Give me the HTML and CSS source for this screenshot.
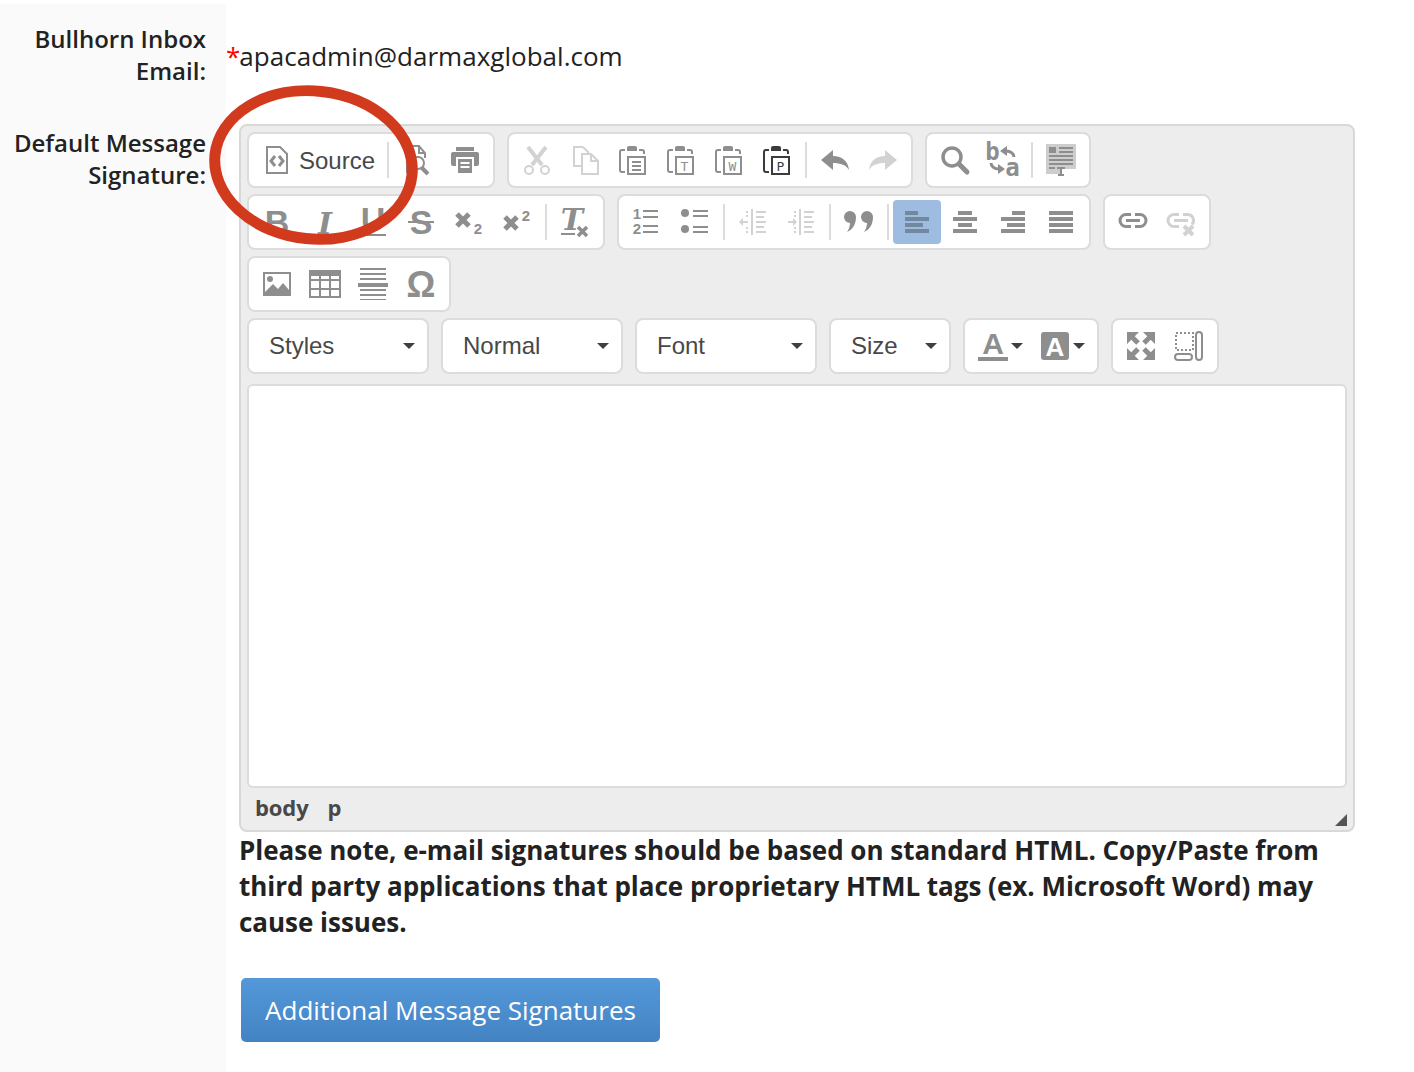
FILE: index.html
```html
<!DOCTYPE html>
<html lang="en">
<head>
<meta charset="utf-8">
<title>Signature settings</title>
<link rel="stylesheet" href="styles.css">
</head>
<body>
<div class="form">
  <div class="label label-first">Bullhorn Inbox<br>Email:</div>
  <div class="value"><span class="req">*</span>apacadmin@darmaxglobal.com</div>
  <div class="label label-second">Default Message<br>Signature:</div>
  <div class="field">
    <div class="editor">
      <div class="toolbar">
        <div class="row">
        <div class="group">
          <div class="btn source">
            <svg class="ic" viewBox="0 0 32 32"><path class="ln" d="M6 3h13l7 7v19H6z"/><path class="ln mid" d="M14 12l-4 5 4 5M18 12l4 5-4 5"/></svg>
            <span class="source-text">Source</span>
          </div>
          <i class="sep"></i>
          <div class="btn"><svg class="ic" viewBox="0 0 32 32"><path class="ln" d="M6 29V2h12l6 7v5M18 2v7h6"/><circle class="ln" cx="17" cy="19" r="6"/><path class="ln thick" d="M21 24l6 6"/></svg></div>
          <div class="btn"><svg class="ic" viewBox="0 0 32 32"><path class="fl" d="M7 3h18v4H7zM4 8h24a2 2 0 0 1 2 2v10a2 2 0 0 1-2 2h-3v-9H7v9H4a2 2 0 0 1-2-2V10a2 2 0 0 1 2-2z"/><path class="fl" d="M9 15h14v14H9zM11.500 18v2h9v-2zm0 4v2h9v-2z" fill-rule="evenodd"/></svg></div>
        </div>
        <div class="group off">
          <div class="btn"><svg class="ic" viewBox="0 0 32 32"><path class="ln thick" d="M7 3l14 18M25 3L11 21"/><circle class="ln" cx="8" cy="26" r="4"/><circle class="ln" cx="24" cy="26" r="4"/></svg></div>
          <div class="btn"><svg class="ic" viewBox="0 0 32 32"><path class="ln" d="M14 3H5v19h7M14 3l6 6M13 10h9l7 7v13H13zM22 10v7h7"/></svg></div>
          <div class="btn on"><svg class="ic" viewBox="0 0 32 32"><use href="#clip"/><path class="ln" d="M11 13h17v17H11z"/><path class="ln" d="M15 18h9M15 22h9M15 26h9"/></svg></div>
          <div class="btn on"><svg class="ic" viewBox="0 0 32 32"><use href="#clip"/><path class="ln" d="M11 13h17v17H11z"/><text class="tiny" x="19.500" y="27">T</text></svg></div>
          <div class="btn on"><svg class="ic" viewBox="0 0 32 32"><use href="#clip"/><path class="ln" d="M11 13h17v17H11z"/><text class="tiny" x="19.500" y="27">W</text></svg></div>
          <div class="btn dark"><svg class="ic" viewBox="0 0 32 32"><use href="#clip"/><path class="ln" d="M11 13h17v17H11z"/><text class="tiny" x="19.500" y="27">P</text></svg></div>
          <i class="sep"></i>
          <div class="btn on"><svg class="ic" viewBox="0 0 32 32"><path class="fl" d="M2 16l12-10v6c9 0 15 5 16 14-3-5-8-7-16-7v7z"/></svg></div>
          <div class="btn"><svg class="ic" viewBox="0 0 32 32"><path class="fl" d="M30 16L18 6v6C9 12 3 17 2 26c3-5 8-7 16-7v7z"/></svg></div>
        </div>
        <div class="group">
          <div class="btn"><svg class="ic" viewBox="0 0 32 32"><circle class="ln fat" cx="13" cy="13" r="9"/><path class="ln fatter" d="M20 20l8 8"/></svg></div>
          <div class="btn"><svg class="ic" viewBox="0 0 32 32"><text class="mono" x="5.500" y="16">b</text><text class="mono" x="25.500" y="32">a</text><path class="ln mid" d="M27 13c0-3-3-6-8-6M4 19c0 3 3 6 8 6"/><path class="fl" d="M20 2l-7 5 7 5zM11 20l7 5-7 5z"/></svg></div>
          <i class="sep"></i>
          <div class="btn"><svg class="ic" viewBox="0 0 32 32"><path class="soft" d="M1 0h30v25H17v5H1z"/><path class="fl" d="M4 3h7v6H4zM14 3h14v2H14zM14 7h14v2H14zM4 11h24v2H4zM4 15h24v2H4zM4 19h24v2H4zM4 23h6v2H4zM12 23h8v2h-3v5h2v2h-6v-2h2v-5h-3z"/></svg></div>
        </div>
        </div>
        <div class="row">
        <div class="group">
          <div class="btn"><svg class="ic" viewBox="0 0 32 32"><text class="glyph b" x="16" y="28">B</text></svg></div>
          <div class="btn"><svg class="ic" viewBox="0 0 32 32"><text class="glyph serif-i" x="16" y="28">I</text></svg></div>
          <div class="btn"><svg class="ic" viewBox="0 0 32 32"><text class="glyph b" x="16" y="25">U</text><path class="fl" d="M3 28h26v2H3z"/></svg></div>
          <div class="btn"><svg class="ic" viewBox="0 0 32 32"><text class="glyph b" x="16" y="28">S</text><path class="fl" d="M3 15h26v2H3z"/></svg></div>
          <div class="btn"><svg class="ic" viewBox="0 0 32 32"><path class="ln heavy" d="M4 8l12 12M16 8L4 20"/><text class="sub" x="25" y="28">2</text></svg></div>
          <div class="btn"><svg class="ic" viewBox="0 0 32 32"><path class="ln heavy" d="M4 11l12 12M16 11L4 23"/><text class="sub" x="25" y="15">2</text></svg></div>
          <i class="sep"></i>
          <div class="btn"><svg class="ic" viewBox="0 0 32 32"><text class="glyph serif-i" x="13" y="24">T</text><path class="fl" d="M2 27h14v2H2z"/><path class="ln fat" d="M19 21l9 9M28 21l-9 9"/></svg></div>
        </div>
        <div class="group">
          <div class="btn"><svg class="ic" viewBox="0 0 32 32"><text class="sub" x="6" y="13">1</text><text class="sub" x="6" y="28">2</text><path class="bar" d="M12 4h15v2H12zM12 10h15v2H12zM12 19h15v2H12zM12 25h15v2H12z"/></svg></div>
          <div class="btn"><svg class="ic" viewBox="0 0 32 32"><circle class="fl" cx="6" cy="7" r="4"/><circle class="fl" cx="6" cy="23" r="4"/><path class="bar" d="M14 4h15v2H14zM14 9h15v2H14zM14 20h15v2H14zM14 25h15v2H14z"/></svg></div>
          <i class="sep"></i>
          <div class="btn off"><svg class="ic" viewBox="0 0 32 32"><path class="fl" d="M14 3h2v26h-2zM19 5h10v2H19zM19 10h8v2H19zM19 15h10v2H19zM19 20h8v2H19zM19 25h10v2H19zM9 5h2v2H9zM9 9h2v2H9zM9 21h2v2H9zM9 25h2v2H9zM2 16l4-4v3h5v2H6v3z"/></svg></div>
          <div class="btn off"><svg class="ic" viewBox="0 0 32 32"><path class="fl" d="M14 3h2v26h-2zM19 5h10v2H19zM19 10h8v2H19zM19 15h10v2H19zM19 20h8v2H19zM19 25h10v2H19zM9 5h2v2H9zM9 9h2v2H9zM9 21h2v2H9zM9 25h2v2H9zM12 16l-4-4v3H3v2h5v3z"/></svg></div>
          <i class="sep"></i>
          <div class="btn"><svg class="ic" viewBox="0 0 32 32"><path class="fl" d="M7 5a6 6 0 0 1 6 6c0 8-4 13-9 15 2-3 3-6 3-9a6 6 0 0 1 0-12zM24 5a6 6 0 0 1 6 6c0 8-4 13-9 15 2-3 3-6 3-9a6 6 0 0 1 0-12z"/></svg></div>
          <i class="sep"></i>
          <div class="btn active"><svg class="ic" viewBox="0 0 32 32"><path class="fl" d="M4 5h13v4H4zM4 11h24v4H4zM4 17h18v4H4zM4 23h24v4H4z"/></svg></div>
          <div class="btn"><svg class="ic" viewBox="0 0 32 32"><path class="fl" d="M9 5h14v4H9zM4 11h24v4H4zM9 17h14v4H9zM4 23h24v4H4z"/></svg></div>
          <div class="btn"><svg class="ic" viewBox="0 0 32 32"><path class="fl" d="M15 5h13v4H15zM4 11h24v4H4zM10 17h18v4H10zM4 23h24v4H4z"/></svg></div>
          <div class="btn"><svg class="ic" viewBox="0 0 32 32"><path class="fl" d="M4 5h24v4H4zM4 11h24v4H4zM4 17h24v4H4zM4 23h24v4H4z"/></svg></div>
        </div>
        <div class="group">
          <div class="btn"><svg class="ic" viewBox="0 0 32 32"><path class="ln mid" d="M14 8.500H9a6 6 0 0 0 0 12h5M18 8.500h5a6 6 0 0 1 0 12h-5M9 14.500h14"/></svg></div>
          <div class="btn off"><svg class="ic" viewBox="0 0 32 32"><path class="ln mid" d="M14 8.500H9a6 6 0 0 0 0 12h5M18 8.500h5a6 6 0 0 1 4 10M9 14.500h14"/><path class="ln thick" d="M19 20l9 9M28 20l-9 9"/></svg></div>
        </div>
        </div>
        <div class="row">
        <div class="group">
          <div class="btn"><svg class="ic" viewBox="0 0 32 32"><path class="fl" fill-rule="evenodd" d="M2 4h28v24H2zM4 6v18l8-8 5 5 5-6 6 7V6z"/><circle class="fl" cx="9" cy="11" r="3"/></svg></div>
          <div class="btn"><svg class="ic" viewBox="0 0 32 32"><path class="fl" d="M0 2h32v6H0z"/><path class="ln" d="M1 3h30v26H1zM1 12h30M1 21h30M11 8v21M21 8v21"/></svg></div>
          <div class="btn"><svg class="ic" viewBox="0 0 32 32"><path class="bar" d="M3 0h26v2H3zM3 5h26v2H3zM3 10h26v2H3zM3 21h26v2H3zM3 26h26v2H3zM3 31h26v1H3z"/><path class="fl" d="M1 15h30v4H1z"/></svg></div>
          <div class="btn"><svg class="ic" viewBox="0 0 32 32"><text class="glyph omega" x="16" y="29">Ω</text></svg></div>
        </div>
        </div>
        <div class="row">
        <div class="group combo"><span>Styles</span><b class="caret"></b></div>
        <div class="group combo"><span>Normal</span><b class="caret"></b></div>
        <div class="group combo"><span>Font</span><b class="caret"></b></div>
        <div class="group combo combo-size"><span>Size</span><b class="caret"></b></div>
        <div class="group colors">
          <div class="btn color"><svg class="ic" viewBox="0 0 32 32"><text class="glyph colora" x="16" y="24">A</text><path class="fl" d="M1 27h30v4H1z"/></svg><b class="caret"></b></div>
          <div class="btn color"><svg class="ic" viewBox="0 0 32 32"><rect class="fl" x="2" y="2" width="28" height="28" rx="3"/><text class="glyph colorw" x="16" y="26">A</text></svg><b class="caret"></b></div>
        </div>
        <div class="group">
          <div class="btn"><svg class="ic" viewBox="0 0 32 32"><path class="fl" d="M2 2h12L2 14zM30 2H18l12 12zM2 30h12L2 18zM30 30H18l12-12z"/><path class="ln heavy" d="M7 7l6 6M25 7l-6 6M7 25l6-6M25 25l-6-6"/></svg></div>
          <div class="btn"><svg class="ic" viewBox="0 0 32 32"><path class="ln dot" d="M3 3h17v17H3z"/><rect class="ln" x="23" y="2" width="6" height="28" rx="3"/><rect class="ln" x="2" y="24" width="17" height="6" rx="3"/></svg></div>
        </div>
        </div>
      </div>
      <div class="content"></div>
      <div class="footer">
        <span class="crumb">body</span><span class="crumb">p</span>
        <i class="grip"></i>
      </div>
    </div>
    <p class="note">Please note, e-mail signatures should be based on standard HTML. Copy/Paste from third party applications that place proprietary HTML tags (ex. Microsoft Word) may cause issues.</p>
    <a class="action">Additional Message Signatures</a>
  </div>
</div>
<svg class="defs" width="0" height="0"><defs><g id="clip"><path class="clipline" d="M8 6H5a2 2 0 0 0-2 2v18a2 2 0 0 0 2 2h3M22 6h3a2 2 0 0 1 2 2v2"/><path class="clipfill" d="M10 4a2 2 0 0 1 2-2h6a2 2 0 0 1 2 2v3H10z"/></g></defs></svg>
<svg class="marker" viewBox="0 0 230 175" width="230" height="175"><ellipse cx="105.500" cy="81" rx="99" ry="74" transform="rotate(6 105.500 81)"/></svg>
</body>
</html>
```
FILE: styles.css
```css
* { box-sizing: border-box; }
html, body { margin: 0; background: #fff; }
body { position: relative; padding-top: 4px; font-family: "Open Sans", "Liberation Sans", sans-serif; color: #222; overflow: hidden; height: 1072px; }
.form { display: grid; grid-template-columns: 226px 1fr; grid-template-rows: 120px auto; min-height: 1068px; }
.label { background: #fafafa; text-align: right; padding-right: 20px; font-size: 24px; line-height: 32px; font-weight: 600; color: #222; }
.label-first { padding-top: 19px; }
.label-second { padding-top: 3px; }
.value { padding-top: 34px; font-size: 26px; line-height: 36px; letter-spacing: 0.02px; color: #222; }
.req { color: #f00; margin-right: -1px; }
.field { padding-left: 13px; }
.editor { width: 1116px; height: 708px; border: 2px solid #d8d8d8; border-radius: 8px; background: #ededed; padding: 6px 6px 0; display: flex; flex-direction: column; }
.toolbar { display: flex; flex-direction: column; gap: 6px; margin-bottom: 10px; }
.row { display: flex; gap: 12px; }
.group { display: flex; align-items: center; height: 56px; padding: 4px; border: 2px solid #dcdcdc; border-radius: 8px; background: #fff; color: #8e8e8e; }
.btn { width: 48px; height: 44px; display: flex; align-items: center; justify-content: center; border-radius: 4px; color: #8e8e8e; }
.group.off .btn, .btn.off { color: #d2d2d2; }
.group.off .btn.on { color: #8e8e8e; }
.group.off .btn.dark { color: #3c3c3c; }
.btn.active { background: #9dbcdf; color: #71889f; }
.source { width: 130px; gap: 6px; justify-content: flex-start; padding-left: 8px; }
.source-text { font: 24px "Liberation Sans", Arial, sans-serif; color: #484848; padding-top: 2px; }
.sep { width: 2px; height: 36px; margin: 0 4px; background: #dcdcdc; }
.ic { width: 32px; height: 32px; flex: none; overflow: visible; }
.ln { fill: none; stroke: currentColor; stroke-width: 2; }
.thick { stroke-width: 4; }
.mid { stroke-width: 3; }
.fat { stroke-width: 3.500; }
.heavy { stroke-width: 5; }
.fatter { stroke-width: 5; stroke-linecap: round; }
.dot { stroke-dasharray: 2 2; }
.fl { fill: currentColor; }
.bar { fill: currentColor; }
.soft { fill: #cdcdcd; }
.clipline { fill: none; stroke: currentColor; stroke-width: 2; }
.clipfill { fill: currentColor; }
.tiny { fill: currentColor; font: 13px "DejaVu Sans Mono", monospace; text-anchor: middle; }
.mono { fill: currentColor; font: bold 24px "DejaVu Sans Mono", monospace; text-anchor: middle; }
.glyph { fill: currentColor; text-anchor: middle; font-family: "Liberation Sans", Arial, sans-serif; }
.b { font-size: 34px; font-weight: 700; }
.serif-i { font-family: "DejaVu Serif", "Liberation Serif", serif; font-size: 30px; font-weight: 700; font-style: italic; }
.omega { font-size: 36px; font-weight: 700; }
.colora { font-size: 30px; font-weight: 700; }
.colorw { font-size: 26px; font-weight: 700; fill: #fff; }
.sub { fill: currentColor; font: 700 15px "Liberation Sans", sans-serif; text-anchor: middle; }
.combo { width: 182px; padding: 0 12px 0 20px; justify-content: space-between; font: 24px "Liberation Sans", Arial, sans-serif; color: #484848; }
.combo-size { width: 122px; }
.caret { width: 0; height: 0; border: 6px solid transparent; border-top-color: #3f3f3f; border-bottom: 0; flex: none; }
.colors { gap: 0; padding: 4px; }
.color { justify-content: flex-start; padding-left: 8px; gap: 2px; width: 62px; }
.content { height: 404px; flex: none; background: #fff; border: 2px solid #dcdcdc; border-radius: 6px; }
.footer { position: relative; flex: 1; display: flex; gap: 20px; padding: 4px 0 0 8px; font-size: 22px; line-height: 30px; font-weight: 700; color: #484848; }
.crumb { letter-spacing: -0.1px; }
.crumb + .crumb { margin-left: -1px; }
.grip { position: absolute; right: 0; bottom: 4px; width: 12px; height: 12px; background: #555; clip-path: polygon(100% 0, 100% 100%, 0 100%); }
.note { width: 1116px; margin: 0 0 38px; font-size: 26px; line-height: 36px; font-weight: 700; letter-spacing: -0.015px; color: #222; }
.action { display: flex; align-items: center; justify-content: center; width: 419px; height: 64px; margin-left: 2px; border-radius: 5px; background: linear-gradient(#5498d9, #4383c3); color: #fff; font-size: 26px; }
.defs { position: absolute; }
.marker { position: absolute; left: 208px; top: 84px; overflow: visible; }
.marker ellipse { fill: none; stroke: #d23a1e; stroke-width: 11; }
```
